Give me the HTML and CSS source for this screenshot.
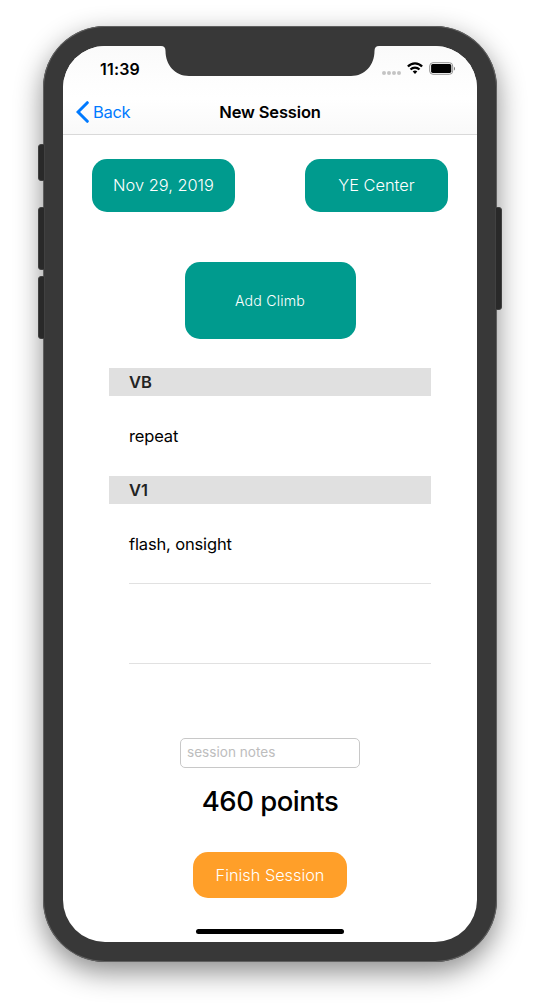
FILE: index.html
```html
<!DOCTYPE html>
<html lang="en">
<head>
<meta charset="utf-8">
<title>New Session</title>
<link rel="stylesheet" href="styles.css">
</head>
<body>
<div class="phone">
  <span class="key key-mute"></span>
  <span class="key key-up"></span>
  <span class="key key-down"></span>
  <span class="key key-power"></span>
  <main class="screen">
    <svg class="notch" width="218" height="30" viewBox="0 0 218 30"><path d="M-1 0C2 0 3.500 1.500 3.500 5C3.500 19 13 30 27 30H189C203 30 212.500 19 212.500 5C212.500 1.500 214 0 217 0Z"/></svg>
    <header class="top">
      <div class="status">
        <span class="time">11:39</span>
        <div class="status-icons">
          <span class="dots"><i></i><i></i><i></i><i></i></span>
          <svg class="wifi" width="16" height="12" viewBox="0 0 16 12"><g fill="none" stroke="#000" stroke-width="2.300"><path d="M.9 4.500C4.900.3 11.100.3 15.100 4.500"/><path d="M3.500 7.500C6 5 10 5 12.500 7.500"/></g><path d="M5.700 9.400C7 8.300 9 8.300 10.300 9.400L8 11.900Z"/></svg>
          <svg class="battery" width="27" height="13" viewBox="0 0 27 13"><rect x=".7" y=".7" width="23" height="11.600" rx="3.300" fill="none" stroke="#929292"/><rect x="2.100" y="2.100" width="20.200" height="8.800" rx="1.600"/><path d="M25 4.700C26.400 5.500 26.400 7.800 25 8.600Z" fill="#777"/></svg>
        </div>
      </div>
      <nav class="nav">
        <a class="back"><svg width="13" height="22" viewBox="0 0 13 22"><path d="M11.300 1.700L2 11L11.300 20.300" fill="none" stroke="#007aff" stroke-width="3" stroke-linecap="round"/></svg><span>Back</span></a>
        <h1 class="title">New Session</h1>
      </nav>
    </header>
    <div class="choices">
      <button class="btn date"><span>Nov 29, 2019</span></button>
      <button class="btn gym"><span>YE Center</span></button>
    </div>
    <button class="btn add"><span>Add Climb</span></button>
    <section class="list">
      <h2>VB</h2>
      <p><span class="repeat">repeat</span></p>
      <h2>V1</h2>
      <p class="ruled"><span class="flash">flash, onsight</span></p>
      <p class="ruled"></p>
    </section>
    <div class="notes"><span>session notes</span></div>
    <div class="points"><span>460 points</span></div>
    <button class="btn finish"><span>Finish Session</span></button>
    <div class="home"></div>
  </main>
</div>
</body>
</html>
```
FILE: styles.css
```css
* { box-sizing: border-box; }
body { margin: 0; padding: 26px 43px; height: 1004px; overflow: hidden; background: #fff; font-family: Inter, "Liberation Sans", sans-serif; color: #000; }
h1, h2, p { margin: 0; }
span { white-space: nowrap; }
.phone { position: relative; width: 454px; height: 936px; padding: 20px; border-radius: 62px; background: #383838; box-shadow: inset 0 0 0 1px #606060, 0 10px 28px rgba(0,0,0,.46); }
.key { position: absolute; left: -5px; width: 7px; background: #292929; border: 1px solid #414141; border-radius: 3px 0 0 3px; }
.key-mute { top: 118px; height: 37px; }
.key-up { top: 181px; height: 63px; }
.key-down { top: 250px; height: 63px; }
.key-power { left: auto; right: -5px; top: 181px; height: 103px; border-radius: 0 3px 3px 0; }
.screen { position: relative; display: flex; flex-direction: column; align-items: center; width: 414px; height: 896px; overflow: hidden; background: #fff; border-radius: 42px; }
.notch { position: absolute; top: 0; left: 99px; fill: #383838; overflow: visible; }
.top { width: 100%; height: 89px; border-bottom: 1px solid #d9d9d9; background: linear-gradient(#fafafa, #fefefe 45%, #fff 60%, #f9f9f9); }
.status { display: flex; justify-content: space-between; height: 44px; padding: 13px 21px 0 37px; }
.time { font-size: 16px; line-height: 20px; font-weight: 600; letter-spacing: .2px; }
.status-icons { display: flex; height: 20px; }
.dots { display: flex; gap: 1px; padding-top: 12px; margin-right: 6px; }
.dots i { width: 4px; height: 4px; border-radius: 50%; background: #c4c4c4; }
.wifi { margin: 3px 6px 0 0; }
.battery { margin-top: 3px; }
.nav { display: grid; grid-template-columns: 1fr auto 1fr; align-items: center; height: 44px; }
.back { display: flex; align-items: center; gap: 4px; padding-left: 13px; color: #007aff; font-size: 16.5px; letter-spacing: -.3px; }
.title { font-size: 16.5px; line-height: 22px; font-weight: 600; letter-spacing: -.15px; }
.btn { display: flex; align-items: center; justify-content: center; padding: 0; border: 0; border-radius: 15px; background: #009b8e; color: #fff; font-family: inherit; font-weight: 300; font-size: 16.4px; flex-shrink: 0; }
.choices { display: flex; justify-content: space-between; width: 356px; margin-top: 24px; }
.choices .btn { width: 143px; height: 53px; padding-bottom: 1px; }
.add { width: 171px; height: 77px; margin-top: 50px; font-size: 14.2px; letter-spacing: .2px; }
.list { width: 322px; margin-top: 29px; font-size: 16.5px; }
.list h2 { height: 28px; padding-left: 20px; background: #e0e0e0; color: #232323; font-size: 16.5px; line-height: 28px; font-weight: 600; letter-spacing: -.05px; }
.list p { height: 80px; margin-left: 20px; line-height: 80px; letter-spacing: -.15px; }
.list .ruled { border-bottom: 1px solid #e1e1e1; }
.notes { width: 180px; height: 30px; margin-top: 74px; padding-left: 6px; border: 1px solid #c8c8c8; border-radius: 5px; color: #bdbdbd; font-size: 13.6px; line-height: 27px; }
.points { height: 34px; margin-top: 16px; font-size: 27.5px; line-height: 35px; font-weight: 500; letter-spacing: -.5px; }
.finish { width: 154px; height: 46px; margin-top: 34px; background: #ff9f29; font-size: 16.3px; }
.home { width: 148px; height: 5px; margin-top: 31px; border-radius: 3px; background: #000; }
```
